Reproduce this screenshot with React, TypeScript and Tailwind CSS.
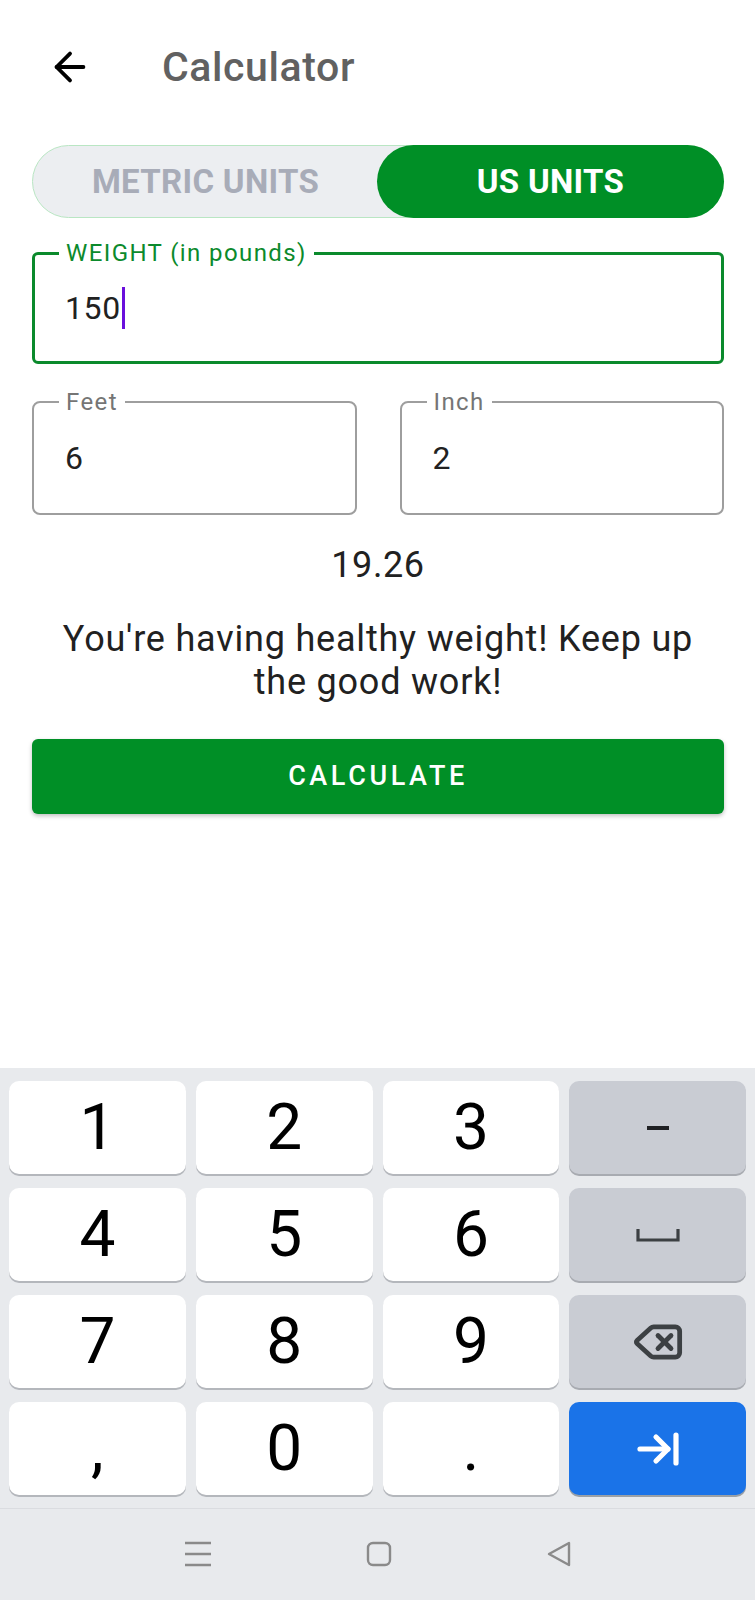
import { ArrowLeft, ArrowRightToLine, Delete } from "lucide-react";

const digitRows = [
  ["1", "2", "3"],
  ["4", "5", "6"],
  ["7", "8", "9"],
  [",", "0", "."],
];

const SpaceIcon = () => (
  <svg width="44" height="16" viewBox="0 0 44 16" fill="none">
    <path d="M2 2v11h40V2" stroke="#3c4043" strokeWidth="3.2" />
  </svg>
);

const FnKey = ({ children, blue }: { children: React.ReactNode; blue?: boolean }) => (
  <div
    className={
      blue
        ? "h-[93px] rounded-[10px] bg-[#1a73e8] shadow-[0_2px_0_#9aa0a6] flex items-center justify-center text-white"
        : "h-[93px] rounded-[10px] bg-[#c9ccd3] shadow-[0_2px_0_#a8abb1] flex items-center justify-center text-[#3c4043]"
    }
  >
    {children}
  </div>
);

const OutlinedField = ({
  label,
  value,
  focused,
  height,
}: {
  label: string;
  value: string;
  focused?: boolean;
  height: string;
}) => (
  <div
    className={
      focused
        ? `relative ${height} rounded-[6px] border-[3px] border-[#0b8a2c] flex items-center pl-[30px]`
        : `relative ${height} rounded-[8px] border-2 border-[#9e9e9e] flex items-center pl-[31px]`
    }
  >
    <span
      className={
        focused
          ? "absolute -top-[17px] left-[24px] bg-white px-[7px] text-[24px] tracking-[1.4px] leading-[30px] text-[#0b8a2c]"
          : "absolute -top-[16px] left-[25px] bg-white px-[7px] text-[24px] tracking-[1.4px] leading-[30px] text-[#757575]"
      }
    >
      {label}
    </span>
    <span className="text-[32px] tracking-[0.6px] text-[#212121] leading-none">{value}</span>
    {focused && <span className="ml-[1px] w-[3px] h-[42px] bg-[#6a0fdc]" />}
  </div>
);

export default function App() {
  return (
    <div className="w-[755px] h-[1600px] bg-white flex flex-col font-['Roboto',sans-serif]">
      {/* header */}
      <div className="h-[60px] mt-[38px] flex items-center pl-[47px]">
        <ArrowLeft size={46} strokeWidth={2} className="text-black -mt-[3px]" />
        <span className="ml-[69px] text-[41px] tracking-[0.6px] font-medium text-[#616161]">Calculator</span>
      </div>

      <div className="px-[32px] pr-[31px] flex flex-col">
        {/* unit toggle */}
        <div className="mt-[47px] h-[73px] rounded-full bg-[#eceef1] border border-[#b9e6c3] grid grid-cols-2">
          <div className="flex items-center justify-center text-[33px] font-bold text-[#a8acb8] tracking-[0.3px]">
            METRIC UNITS
          </div>
          <div className="-m-px rounded-full bg-[#008f26] flex items-center justify-center text-[33px] font-bold text-white tracking-[0.3px]">
            US UNITS
          </div>
        </div>

        <div className="mt-[34px]">
          <OutlinedField label="WEIGHT (in pounds)" value="150" focused height="h-[112px]" />
        </div>

        <div className="mt-[37px] grid grid-cols-2 gap-[43px]">
          <OutlinedField label="Feet" value="6" height="h-[114px]" />
          <OutlinedField label="Inch" value="2" height="h-[114px]" />
        </div>

        <div className="mt-[29px] text-center text-[36px] tracking-[0.6px] leading-[42px] text-[#212121]">19.26</div>

        <p className="mt-[32px] text-center text-[36px] tracking-[0.8px] leading-[43px] text-[#212121] px-[20px]">
          You're having healthy weight! Keep up the good work!
        </p>

        <button className="mt-[35px] h-[75px] rounded-[6px] bg-[#008f26] shadow-[0_2px_4px_rgba(0,0,0,0.25)] text-white text-[27px] font-medium tracking-[3.6px]">
          CALCULATE
        </button>
      </div>

      <div className="flex-1" />

      {/* numeric keyboard */}
      <div className="bg-[#e8eaed] px-[9px] py-[13px] grid grid-cols-4 gap-x-[10px] gap-y-[14px]">
        {digitRows.map((row, i) => (
          <div key={i} className="contents">
            {row.map((k) => (
              <div
                key={k}
                className="h-[93px] rounded-[10px] bg-white shadow-[0_2px_0_#b4b7bc] flex items-center justify-center text-[64px] leading-none text-black"
              >
                {k}
              </div>
            ))}
            {i === 0 && (
              <FnKey>
                <span className="block w-[22px] h-[4px] bg-[#202124]" />
              </FnKey>
            )}
            {i === 1 && (
              <FnKey>
                <SpaceIcon />
              </FnKey>
            )}
            {i === 2 && (
              <FnKey>
                <Delete size={52} strokeWidth={2.2} />
              </FnKey>
            )}
            {i === 3 && (
              <FnKey blue>
                <ArrowRightToLine size={48} strokeWidth={2.6} />
              </FnKey>
            )}
          </div>
        ))}
      </div>

      {/* system nav bar */}
      <div className="h-[92px] bg-[#e8eaed] border-t border-[#dadce0] flex items-center justify-center gap-[154px] pb-[2px]">
        <svg width="28" height="26" viewBox="0 0 28 26" fill="none" stroke="#8a8a8a" strokeWidth="2.4">
          <path d="M1 2h26M1 13h26M1 24h26" />
        </svg>
        <svg width="26" height="26" viewBox="0 0 26 26" fill="none" stroke="#8a8a8a" strokeWidth="2.4">
          <rect x="2" y="2" width="22" height="22" rx="5" />
        </svg>
        <svg width="26" height="26" viewBox="0 0 26 26" fill="none" stroke="#8a8a8a" strokeWidth="2.4" strokeLinejoin="round">
          <path d="M23 2v22L3 13z" />
        </svg>
      </div>
    </div>
  );
}
